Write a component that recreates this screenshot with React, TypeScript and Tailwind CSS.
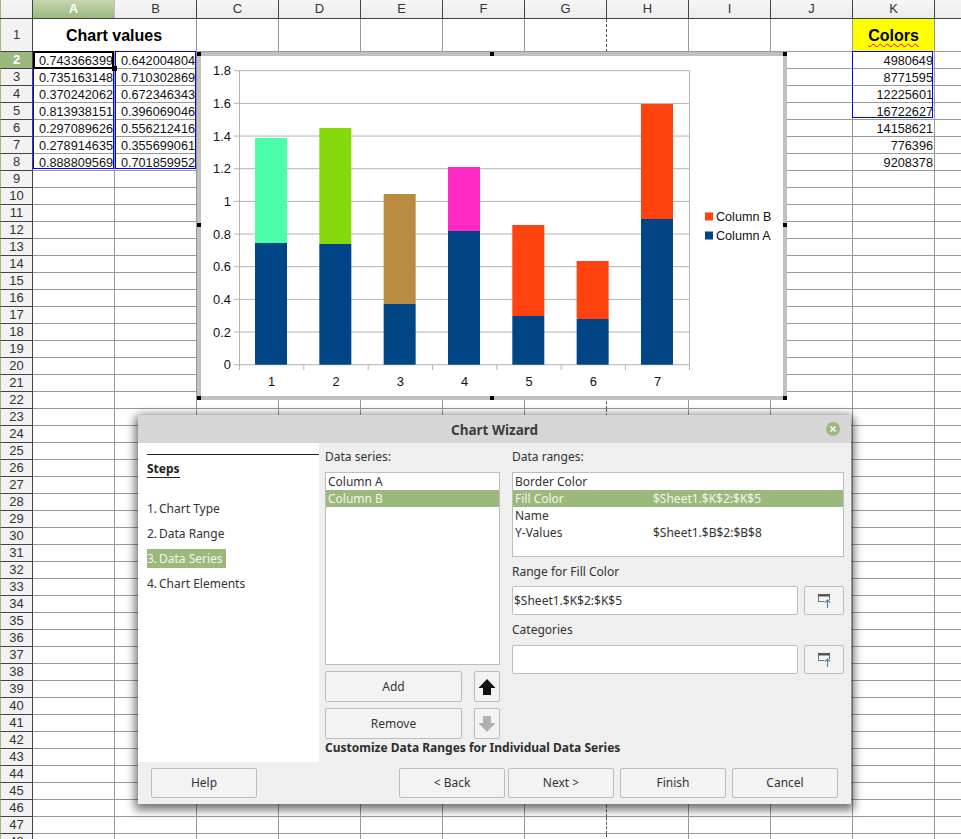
import { Fragment } from "react";

const cols = ["A", "B", "C", "D", "E", "F", "G", "H", "I", "J", "K"];

const valuesA = ["0.743366399", "0.735163148", "0.370242062", "0.813938151", "0.297089626", "0.278914635", "0.888809569"];
const valuesB = ["0.642004804", "0.710302869", "0.672346343", "0.396069046", "0.556212416", "0.355699061", "0.701859952"];
const colors = ["4980649", "8771595", "12225601", "16722627", "14158621", "776396", "9208378"];

// a, b, colour of the b part
const bars: [number, number, string][] = [
  [0.743366399, 0.642004804, "#4bffa9"],
  [0.735163148, 0.710302869, "#85d80b"],
  [0.370242062, 0.672346343, "#ba8c41"],
  [0.813938151, 0.396069046, "#ff2ac3"],
  [0.297089626, 0.556212416, "#ff420e"],
  [0.278914635, 0.355699061, "#ff420e"],
  [0.888809569, 0.701859952, "#ff420e"],
];

const Y0 = 364.7;
const UNIT = 163.3;
const ticks = ["1.8", "1.6", "1.4", "1.2", "1", "0.8", "0.6", "0.4", "0.2", "0"];

function cellText(col: string, row: number) {
  const i = row - 2;
  if (i < 0 || i > 6) return "";
  if (col === "A") return valuesA[i];
  if (col === "B") return valuesB[i];
  if (col === "K") return colors[i];
  return "";
}

function Cell({ col, row }: { col: string; row: number }) {
  const text = cellText(col, row);
  if (row === 1 && col === "A") {
    return (
      <div className="relative w-[82px] border-b border-[#999] bg-white">
        <span className="absolute left-[33px] top-[7px] whitespace-nowrap text-[16px] font-bold leading-[19px] text-black">Chart values</span>
      </div>
    );
  }
  if (row === 1 && col === "B") return <div className="w-[82px] border-r border-b border-[#999] bg-white" />;
  if (row === 1 && col === "K") {
    return (
      <div className="flex w-[82px] items-center justify-center border-r border-b border-[#999] bg-[#ffff00] pt-[1px] text-[16px] font-bold text-black">
        <span className="underline decoration-wavy decoration-[#ff0000] decoration-1 underline-offset-2">Colors</span>
      </div>
    );
  }
  return (
    <div
      className={
        col === "G"
          ? "w-[82px] overflow-hidden border-r border-b border-b-[#999] border-r-[#555] [border-right-style:dashed] bg-white"
          : "w-[82px] overflow-hidden border-r border-b border-[#999] bg-white"
      }
    >
      {text && <p className="pr-[1px] text-right text-[12.7px] leading-[18px] whitespace-nowrap text-[#111]">{text}</p>}
    </div>
  );
}

function Sheet() {
  const rows = Array.from({ length: 48 }, (_, i) => i + 1);
  return (
    <div className="font-['Liberation_Sans',sans-serif]">
      <div className="flex h-[19px] border-b border-[#444] bg-gradient-to-b from-[#f6f6f6] to-[#ececec] text-[13px] text-[#333]">
        <div className="w-[33px] border-r border-l border-[#444] border-l-[#9cb97d]" />
        {cols.map((c) => (
          <div
            key={c}
            className={
              c === "A"
                ? "flex w-[82px] items-center justify-center border-r border-[#bbb] bg-gradient-to-b from-[#c6d6b2] to-[#9cb97d] font-bold text-white"
                : "flex w-[82px] items-center justify-center border-r border-[#444]"
            }
          >
            {c}
          </div>
        ))}
        <div className="flex-1" />
      </div>
      {rows.map((r) => (
        <div key={r} className={r === 1 ? "flex h-[33px]" : "flex h-[17px]"}>
          <div
            className={
              r === 2
                ? "flex w-[33px] items-center justify-center border-r border-b border-l border-[#444] border-l-[#9cb97d] bg-[#9cb97d] text-[13px] font-bold text-white"
                : "flex w-[33px] items-center justify-center border-r border-b border-l border-[#444] border-l-[#9cb97d] bg-[#f2f2f2] text-[13px] text-[#333]"
            }
          >
            {r}
          </div>
          {cols.map((c) => (
            <Cell key={c} col={c} row={r} />
          ))}
          <div className="flex-1 border-b border-[#999] bg-white" />
        </div>
      ))}
    </div>
  );
}

function SheetMarks() {
  return (
    <>
      <div className="absolute left-[33px] top-[51px] h-[118px] w-[81px] border border-[#0000ff]" />
      <div className="absolute left-[115px] top-[51px] h-[118px] w-[81px] border border-[#0000ff]" />
      <div className="absolute left-[852px] top-[51px] h-[67px] w-[81px] border border-[#0000ff]" />
      <div className="absolute left-[33px] top-[51px] h-[18px] w-[81px] border-2 border-black" />
      <div className="absolute left-[112px] top-[66px] h-[5px] w-[5px] bg-black" />
    </>
  );
}

function Chart() {
  const handles = [
    "left-[-4px] top-[-4px]",
    "left-[289px] top-[-4px]",
    "right-[-4px] top-[-4px]",
    "left-[-4px] top-[167px]",
    "right-[-4px] top-[167px]",
    "left-[-4px] bottom-[-4px]",
    "left-[289px] bottom-[-4px]",
    "right-[-4px] bottom-[-4px]",
  ];
  return (
    <div className="absolute left-[197px] top-[52px] h-[348px] w-[590px] border-4 border-[#c0c0c0] bg-white">
      <svg viewBox="201 56 582 340" className="block h-[340px] w-[582px] font-['Liberation_Sans',sans-serif]">
        {ticks.map((t, i) => {
          const y = 70.7 + i * 32.67;
          return (
            <Fragment key={t}>
              <line x1="234" x2="689.5" y1={y} y2={y} stroke="#b3b3b3" strokeWidth="1" />
              <text x="231" y={y + 4.5} textAnchor="end" fontSize="12.9" fill="#111">{t}</text>
            </Fragment>
          );
        })}
        <line x1="239.5" x2="239.5" y1="70.5" y2="365" stroke="#b3b3b3" />
        <line x1="689.5" x2="689.5" y1="70.5" y2="370" stroke="#b3b3b3" />
        {bars.map(([a, b, color], i) => {
          const x = 255 + i * 64.33;
          const yA = Math.floor(Y0 - a * UNIT);
          const yB = Math.floor(Y0 - (a + b) * UNIT);
          return (
            <Fragment key={i}>
              <rect x={x} y={yB} width="32" height={yA - yB} fill={color} />
              <rect x={x} y={yA} width="32" height={Y0 - yA} fill="#004586" />
              <line x1={239.5 + i * 64.33} x2={239.5 + i * 64.33} y1="365" y2="370" stroke="#b3b3b3" />
              <text x={x + 16.7} y="385.5" textAnchor="middle" fontSize="12.9" fill="#111">{i + 1}</text>
            </Fragment>
          );
        })}
        <rect x="705" y="212.5" width="8" height="8" fill="#ff420e" />
        <text x="716" y="221" fontSize="12.6" fill="#111">Column B</text>
        <rect x="705" y="231.5" width="8" height="8" fill="#004586" />
        <text x="716" y="240" fontSize="12.6" fill="#111">Column A</text>
      </svg>
      {handles.map((h) => (
        <span key={h} className={"absolute h-[4px] w-[4px] bg-black " + h} />
      ))}
    </div>
  );
}

function Btn({ label, className }: { label: string; className: string }) {
  return (
    <button className={"flex items-center justify-center rounded-[2px] border border-[#bdbdbd] bg-[#f3f3f3] text-[12px] text-[#333] " + className}>
      {label}
    </button>
  );
}

function ArrowBtn({ up, disabled }: { up?: boolean; disabled?: boolean }) {
  return (
    <button className="flex h-[31px] w-[26px] items-center justify-center rounded-[2px] border border-[#bdbdbd] bg-[#f3f3f3]">
      <svg width="18" height="18" viewBox="0 0 18 18">
        {up ? (
          <path d="M9 1 L17.5 10 H13 V17 H5 V10 H0.5 Z" fill={disabled ? "#b0b0b0" : "#111"} />
        ) : (
          <path d="M9 17 L17.5 8 H13 V1 H5 V8 H0.5 Z" fill={disabled ? "#b0b0b0" : "#111"} />
        )}
      </svg>
    </button>
  );
}

function RangeBtn() {
  return (
    <button className="ml-[6px] flex h-[29px] w-[40px] items-center justify-center rounded-[2px] border border-[#bdbdbd] bg-[#f3f3f3]">
      <svg width="13" height="14" viewBox="0 0 13 14">
        <rect x="0.5" y="0.5" width="11" height="7" fill="#f4f4f4" stroke="#777" />
        <rect x="0" y="0" width="12" height="2.5" fill="#555" />
        <path d="M9.5 14 V6 M6.8 8.7 L9.5 6 L12.2 8.7" fill="none" stroke="#f3f3f3" strokeWidth="2.4" />
        <path d="M9.5 14 V6 M6.8 8.7 L9.5 6 L12.2 8.7" fill="none" stroke="#4a7fb5" strokeWidth="1.1" />
      </svg>
    </button>
  );
}

const steps = [
  ["1.", "Chart Type"],
  ["2.", "Data Range"],
  ["3.", "Data Series"],
  ["4.", "Chart Elements"],
];

function Dialog() {
  return (
    <div className="absolute left-[138px] top-[415px] flex h-[389px] w-[713px] flex-col rounded-t-[3px] bg-[#efefef] font-['Noto_Sans',sans-serif] text-[12px] text-[#333] shadow-[0_3px_10px_3px_rgba(0,0,0,0.55)]">
      <div className="relative flex h-[28px] shrink-0 items-center justify-center rounded-t-[3px] bg-[#d6d6d6] pt-[2px] text-[13.5px] font-bold text-[#3c3c3c]">
        Chart Wizard
        <span className="absolute right-[11px] top-[7px] flex h-[14px] w-[14px] items-center justify-center rounded-full bg-[#9cb97d]">
          <svg width="8" height="8" viewBox="0 0 8 8">
            <path d="M1.5 1.5 L6.5 6.5 M6.5 1.5 L1.5 6.5" stroke="#fff" strokeWidth="1.6" />
          </svg>
        </span>
      </div>

      <div className="flex h-[319px] shrink-0">
        <div className="w-[181px] bg-white pl-[9px] pt-[11px]">
          <div className="border-t border-[#222] pt-[5px]">
            <span className="inline-block border-b border-[#222] font-bold leading-[16px] text-[#222]">Steps</span>
          </div>
          <div className="mt-[21px] flex flex-col items-start gap-[6px] leading-[19px]">
            {steps.map(([n, label]) => (
              <p key={n} className={n === "3." ? "flex bg-[#9cb97d] pr-[3px] text-[#f2f5ee]" : "flex"}>
                <span className="w-[12px]">{n}</span>
                {label}
              </p>
            ))}
          </div>
        </div>

        <div className="relative flex-1 pl-[6px]">
          <div className="flex">
            <div className="w-[175px]">
              <p className="mt-[5px] leading-[18px]">Data series:</p>
              <div className="mt-[6px] h-[193px] border border-[#bdbdbd] bg-white leading-[17px]">
                <p className="px-[2px]">Column A</p>
                <p className="bg-[#9cb97d] px-[2px] text-[#f2f5ee]">Column B</p>
              </div>
              <div className="mt-[6px] flex items-center justify-between">
                <Btn label="Add" className="h-[31px] w-[137px]" />
                <ArrowBtn up />
              </div>
              <div className="mt-[6px] flex items-center justify-between">
                <Btn label="Remove" className="h-[31px] w-[137px]" />
                <ArrowBtn disabled />
              </div>
            </div>

            <div className="ml-[12px] w-[332px]">
              <p className="mt-[5px] leading-[18px]">Data ranges:</p>
              <div className="mt-[6px] h-[85px] border border-[#bdbdbd] bg-white leading-[17px]">
                <p className="px-[2px]">Border Color</p>
                <p className="flex bg-[#9cb97d] px-[2px] text-[#f2f5ee]">
                  <span className="w-[138px]">Fill Color</span>$Sheet1.$K$2:$K$5
                </p>
                <p className="px-[2px]">Name</p>
                <p className="flex px-[2px]">
                  <span className="w-[138px]">Y-Values</span>$Sheet1.$B$2:$B$8
                </p>
              </div>
              <p className="mt-[6px] leading-[17px]">Range for Fill Color</p>
              <div className="mt-[6px] flex">
                <div className="flex h-[29px] w-[286px] items-center rounded-[2px] border border-[#bdbdbd] bg-white pl-[1px]">$Sheet1.$K$2:$K$5</div>
                <RangeBtn />
              </div>
              <p className="mt-[6px] leading-[18px]">Categories</p>
              <div className="mt-[6px] flex">
                <div className="h-[29px] w-[286px] rounded-[2px] border border-[#bdbdbd] bg-white" />
                <RangeBtn />
              </div>
            </div>
          </div>
          <p className="font-bold leading-[17px] text-[#2e2e2e]">Customize Data Ranges for Individual Data Series</p>
        </div>
      </div>

      <div className="flex flex-1 items-start bg-[#f0f0f0] pl-[13px] pt-[6px]">
        <Btn label="Help" className="h-[30px] w-[106px]" />
        <Btn label="< Back" className="ml-[142px] h-[30px] w-[106px]" />
        <Btn label="Next >" className="ml-[3px] h-[30px] w-[106px]" />
        <Btn label="Finish" className="ml-[6px] h-[30px] w-[106px]" />
        <Btn label="Cancel" className="ml-[6px] h-[30px] w-[106px]" />
      </div>
    </div>
  );
}

export default function App() {
  return (
    <div className="relative h-[839px] w-[961px] overflow-hidden bg-white">
      <Sheet />
      <SheetMarks />
      <Chart />
      <Dialog />
    </div>
  );
}
